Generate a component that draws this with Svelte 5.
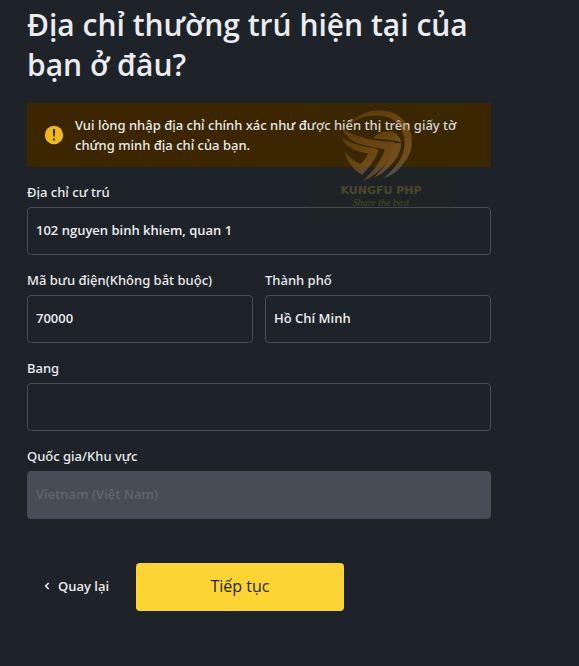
<script lang="ts">
let street = '102 nguyen binh khiem, quan 1';
let postcode = '70000';
let city = 'Hồ Chí Minh';
let region = '';
let country = 'Vietnam (Việt Nam)';
</script>

<main>
    <form on:submit|preventDefault>
        <h1>Địa chỉ thường trú hiện tại của bạn ở đâu?</h1>

        <div class="notice">
            <svg class="noticeicon" viewBox="0 0 20 20" aria-hidden="true">
                <circle cx="10" cy="10" r="9.2" fill="#f0b91b" />
                <path d="M8.9 4h2.2l-.3 7.6H9.2zM9 13.4h2v2H9z" fill="#3c2601" />
            </svg>
            <p>Vui lòng nhập địa chỉ chính xác như được hiển thị trên giấy tờ chứng minh địa chỉ của bạn.</p>
            <div class="watermark">
                <svg class="mark" viewBox="0 0 240 228" aria-hidden="true">
                    <defs>
                        <linearGradient id="gold" x1="0" y1="0" x2="1" y2="1">
                            <stop offset="0" stop-color="#8a5a14" />
                            <stop offset="1" stop-color="#d09245" />
                        </linearGradient>
                    </defs>
                    <g fill="url(#gold)">
                        <path d="M40 50C70 8 130-2 174 16c46 22 64 74 48 118-10 28-40 56-78 74 36-30 62-62 62-104 0-42-26-74-66-80-36-6-72 4-100 26z" />
                        <path d="M16 58c36 26 64 32 96 38 24 4 44 4 66 8-8 46-42 90-98 116 34-32 56-62 66-96-26-6-54-8-82-18C42 96 24 80 16 58z" />
                        <path d="M16 88c30 20 54 24 80 30 14 2 24 4 32 8-10 30-30 54-50 74-28-16-46-40-50-68 12 16 26 28 46 36 10-10 18-20 22-32-30-4-66-14-80-48z" />
                        <path d="M112 92c14-20 44-28 64-18 10 6 18 16 20 28-28-8-54-10-84-10z" />
                    </g>
                    <path d="M196 106c-2 46-46 88-84 104 34-30 56-64 62-104z" fill="#c08a45" />
                    <path d="M140 210c26-10 38-26 50-44 6-2 12-2 16-6-14 26-38 46-66 50z" fill="#8f9087" />
                </svg>
                <span class="brand">KUNGFU PHP</span>
                <span class="slogan">Share the best</span>
            </div>
        </div>

        <div class="field">
            <label for="street">Địa chỉ cư trú</label>
            <input id="street" type="text" bind:value={street} />
        </div>
        <div class="fieldrow">
            <div class="field">
                <label for="postcode">Mã bưu điện(Không bắt buộc)</label>
                <input id="postcode" type="text" bind:value={postcode} />
            </div>
            <div class="field">
                <label for="city">Thành phố</label>
                <input id="city" type="text" bind:value={city} />
            </div>
        </div>
        <div class="field">
            <label for="region">Bang</label>
            <input id="region" type="text" bind:value={region} />
        </div>
        <div class="field">
            <label for="country">Quốc gia/Khu vực</label>
            <input id="country" type="text" value={country} disabled />
        </div>

        <div class="actions">
            <button class="back" type="button">
                <svg viewBox="0 0 6 8" aria-hidden="true">
                    <path d="M4.7 1 1.7 4l3 3" fill="none" stroke="currentColor" stroke-width="1.6" />
                </svg>
                Quay lại
            </button>
            <button class="next" type="submit">Tiếp tục</button>
        </div>
    </form>
</main>

<style>
:global(body) {
    margin: 0;
    background: #1e2329;
}

* {
    box-sizing: border-box;
}

main {
    min-height: 100vh;
    padding: 5px 88px 24px 27px;
    background: #1e2329;
    color: #eaecef;
    font-family: "Open Sans", "Noto Sans", sans-serif;
    font-size: 13px;
    line-height: 20px;
}

h1 {
    margin: 0 0 18px;
    font-size: 30px;
    line-height: 40px;
    font-weight: 600;
}

.notice {
    position: relative;
    display: flex;
    align-items: center;
    gap: 11px;
    padding: 12px 16px 12px 17px;
    background: #3c2601;
}

.notice p {
    flex: 1;
    margin: 0;
}

.notice p,
label {
    font-family: "Noto Sans", "Open Sans", sans-serif;
    font-weight: 500;
}

.noticeicon {
    flex: none;
    width: 20px;
    height: 20px;
}

/* sits over the notice and runs on below it */
.watermark {
    position: absolute;
    top: 5px;
    right: 38px;
    width: 144px;
    height: 112px;
    display: flex;
    flex-direction: column;
    align-items: center;
    background: rgba(50, 40, 10, 0.12);
    color: #4b4629;
    pointer-events: none;
}

.mark {
    width: 80px;
    height: 76px;
    margin-left: -10px;
    opacity: 0.4;
}

.brand {
    font-family: "DejaVu Sans", Verdana, sans-serif;
    font-size: 11px;
    line-height: 14px;
    font-weight: bold;
}

.slogan {
    font-family: "Liberation Serif", serif;
    font-size: 10px;
    line-height: 10px;
    font-style: italic;
}

.field {
    flex: 1;
    min-width: 0;
    margin-top: 15px;
}

.fieldrow {
    display: flex;
    gap: 12px;
}

label {
    display: block;
    margin-bottom: 5px;
}

input {
    display: block;
    width: 100%;
    height: 48px;
    padding: 0 8px 2px;
    border: 1px solid #474d57;
    border-radius: 4px;
    background: transparent;
    color: #eaecef;
    font: inherit;
    font-weight: 600;
    outline: none;
}

input:focus {
    border-color: #fcd535;
}

input:disabled {
    background: #474d57;
    color: #5e6673;
}

.actions {
    display: flex;
    margin-top: 44px;
}

button {
    height: 48px;
    padding: 0 0 2px;
    border: none;
    border-radius: 4px;
    font: inherit;
    cursor: pointer;
}

.back {
    display: flex;
    align-items: center;
    gap: 8px;
    width: 109px;
    padding-left: 17px;
    background: none;
    color: #eaecef;
    font-weight: 600;
}

.back svg {
    width: 6px;
    height: 8px;
}

.next {
    width: 208px;
    background: #fcd535;
    color: #1e2329;
    font-size: 16px;
}
</style>
